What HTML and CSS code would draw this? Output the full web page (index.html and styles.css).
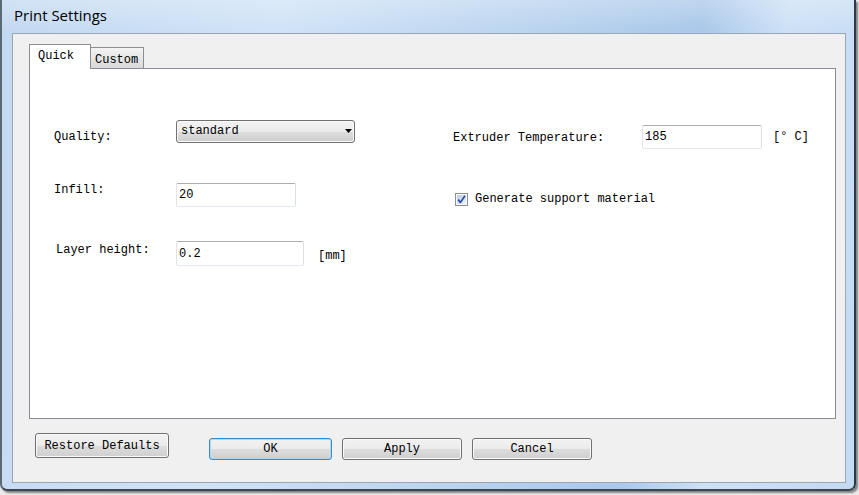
FILE: index.html
```html
<!DOCTYPE html>
<html lang="en">
<head>
<meta charset="utf-8">
<title>Print Settings</title>
<link rel="stylesheet" href="styles.css">
</head>
<body>
<div class="window">
  <div class="titlebar">Print Settings</div>
  <div class="client">
    <div class="tabs">
      <div class="tab tab-active">Quick</div>
      <div class="tab">Custom</div>
    </div>
    <div class="pane">
      <div class="col col-left">
        <div class="row row-quality">
          <span class="label label-quality">Quality:</span>
          <div class="select">
            <span>standard</span>
            <svg class="arrow" width="7" height="4" viewBox="0 0 7 4"><polygon points="0,0 7,0 3.5,4" fill="#000"/></svg>
          </div>
        </div>
        <div class="row row-infill">
          <span class="label">Infill:</span>
          <input class="field field-infill" type="text" value="20">
        </div>
        <div class="row row-layer">
          <span class="label label-layer">Layer height:</span>
          <input class="field field-layer" type="text" value="0.2">
          <span class="unit unit-mm">[mm]</span>
        </div>
      </div>
      <div class="col col-right">
        <div class="row row-temp">
          <span class="label label-temp">Extruder Temperature:</span>
          <input class="field field-temp" type="text" value="185">
          <span class="unit unit-c">[° C]</span>
        </div>
        <div class="row row-check">
          <span class="checkbox">
            <svg width="13" height="13" viewBox="0 0 13 13">
              <defs>
                <linearGradient id="cbfill" x1="0" y1="0" x2="1" y2="1">
                  <stop offset="0" stop-color="#b9cbe6"/>
                  <stop offset="1" stop-color="#eef4fc"/>
                </linearGradient>
              </defs>
              <rect x="0.5" y="0.5" width="12" height="12" fill="#f7f9fc" stroke="#8e8f8f"/>
              <rect x="2" y="2" width="9" height="9" fill="url(#cbfill)"/>
              <path d="M3.2 6.6 L5.4 9.4 L10 2.8" fill="none" stroke="#2d4fa8" stroke-width="1.7" stroke-linejoin="round"/>
            </svg>
          </span>
          <span class="check-label">Generate support material</span>
        </div>
      </div>
    </div>
    <div class="buttons">
      <button class="btn btn-restore" type="button">Restore Defaults</button>
      <button class="btn btn-ok" type="button">OK</button>
      <button class="btn" type="button">Apply</button>
      <button class="btn" type="button">Cancel</button>
    </div>
  </div>
</div>
</body>
</html>
```
FILE: styles.css
```css
* { box-sizing: border-box; }

html, body {
  margin: 0;
  padding: 0;
}

body {
  width: 859px;
  height: 495px;
  overflow: hidden;
  background: #ececec;
  font-family: "Liberation Mono", "DejaVu Sans Mono", monospace;
  font-size: 12px;
  color: #000;
}

.window {
  width: 856px;
  height: 491px;
  display: flex;
  flex-direction: column;
  padding: 0 8px 6px 10px;
  border-left: 2px solid #5b6876;
  border-right: 2px solid #2f3943;
  border-bottom: 2px solid #3c4650;
  border-radius: 0 0 7px 7px;
  box-shadow: 2px 2px 2px rgba(0, 0, 0, 0.45);
  background:
    linear-gradient(180deg, rgba(255, 255, 255, 0.25) 0%, rgba(255, 255, 255, 0) 30px),
    linear-gradient(100deg, #c3d9f1 0%, #d0e3f7 30%, #bcd5ef 55%, #aac8ea 75%, #cde1f6 84%, #c4daf2 100%);
}

.titlebar {
  height: 33px;
  padding: 5px 0 0 2px;
  font-family: "Open Sans", "Noto Sans", sans-serif;
  font-size: 15px;
  line-height: 20px;
  color: #000;
}

.client {
  flex: 1;
  display: flex;
  flex-direction: column;
  background: #f0f0f0;
  border: 1px solid #98a6b6;
  padding: 10px 9px 0 16px;
}

.tabs {
  display: flex;
  align-items: flex-end;
  height: 24px;
}

.tab {
  height: 21px;
  line-height: 14px;
  padding: 5px 5px 0 4px;
  margin-left: -1px;
  border: 1px solid #8c8e94;
  border-bottom: none;
  background: linear-gradient(180deg, #f4f4f4 0%, #e6e6e6 50%, #d8d8d8 100%);
}

.tab-active {
  position: relative;
  z-index: 1;
  width: 62px;
  height: 25px;
  margin-left: 0;
  margin-bottom: -1px;
  padding: 4px 0 0 8px;
  background: #fff;
}

.pane {
  height: 351px;
  display: flex;
  background: #fff;
  border: 1px solid #898c95;
}

.col-left {
  width: 423px;
  padding-left: 24px;
}

.row {
  display: flex;
  align-items: flex-start;
}

.label {
  width: 122px;
  flex: none;
  line-height: 14px;
  white-space: pre;
}

.row-quality { margin-top: 51px; }
.label-quality { margin-top: 10px; }

.row-infill { margin-top: 39px; }

.row-layer { margin-top: 34px; }
.label-layer { margin-top: 2px; padding-left: 2px; }

.select {
  width: 179px;
  height: 23px;
  display: flex;
  align-items: center;
  justify-content: space-between;
  padding: 0 2px 1px 4px;
  border: 1px solid #707070;
  border-radius: 3px;
  box-shadow: inset 0 0 0 1px #fafafa;
  background: linear-gradient(180deg, #f2f2f2 0%, #ebebeb 50%, #dddddd 51%, #cfcfcf 100%);
  line-height: 14px;
}

.arrow { display: block; }

.field {
  margin: 0;
  padding: 0 0 0 2px;
  font-family: "Liberation Mono", "DejaVu Sans Mono", monospace;
  font-size: 12px;
  color: #000;
  background: #fff;
  border: 1px solid;
  border-color: #abadb3 #dbdfe6 #e3e9ef #e2e3ea;
  border-radius: 2px;
  outline: none;
}

.field-infill { width: 120px; height: 24px; }
.field-layer { width: 128px; height: 25px; }
.field-temp { width: 120px; height: 24px; }

.unit {
  line-height: 14px;
  white-space: pre;
}

.unit-mm { margin-left: 14px; margin-top: 8px; }

.col-right {
  flex: 1;
}

.row-temp { margin-top: 56px; }
.label-temp { width: 189px; margin-top: 6px; }
.unit-c { margin-left: 11px; margin-top: 5px; }

.row-check {
  margin-top: 43px;
  padding-left: 2px;
  align-items: center;
}

.checkbox {
  width: 13px;
  height: 13px;
  display: block;
}

.checkbox svg { display: block; }

.check-label {
  margin-left: 7px;
  line-height: 14px;
}

.buttons {
  display: flex;
  align-items: flex-start;
  margin-top: 14px;
  padding-left: 6px;
}

.btn {
  width: 120px;
  height: 22px;
  margin: 5px 0 0 10px;
  padding: 0;
  font-family: "Liberation Mono", "DejaVu Sans Mono", monospace;
  font-size: 12px;
  line-height: 14px;
  color: #000;
  border: 1px solid #707070;
  border-radius: 3px;
  box-shadow: inset 0 0 0 1px #fbfbfb;
  background: linear-gradient(180deg, #f2f2f2 0%, #ebebeb 50%, #dddddd 51%, #cfcfcf 100%);
}

.btn-restore {
  width: 134px;
  height: 25px;
  margin: 0;
}

.btn-ok {
  width: 123px;
  margin-left: 40px;
  border-color: #3c8ac4;
  box-shadow: inset 0 0 0 1px #a9daf6;
}
```
